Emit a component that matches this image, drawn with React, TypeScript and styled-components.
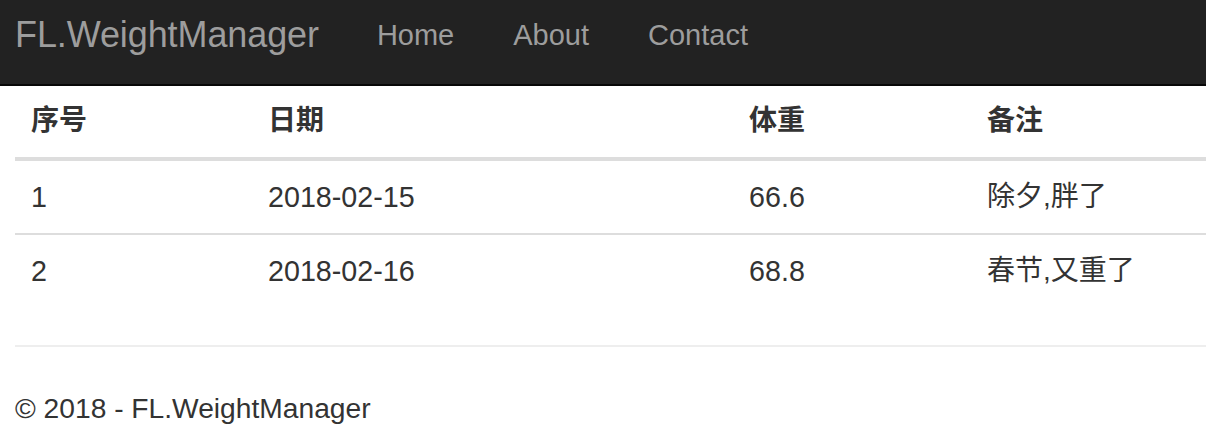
import React from 'react';
import styled, {createGlobalStyle} from 'styled-components';

const GlobalStyle = createGlobalStyle`
    html, body {
        margin: 0;
        padding: 0;
        background: #fff;
    }
    body {
        font-family: "Liberation Sans", Arial, "Noto Sans CJK SC", sans-serif;
        color: #333;
        overflow: hidden;
    }
    * {
        box-sizing: border-box;
    }
`;

const Navbar = styled.nav`
    display: flex;
    align-items: flex-start;
    height: 86px;
    background: #222;
    border-bottom: 2px solid #080808;
    padding-left: 15px;
`;

const Brand = styled.a`
    font-size: 36px;
    line-height: 70px;
    color: #9d9d9d;
    letter-spacing: -0.1px;
    margin-right: 58px;
`;

const NavLink = styled.a`
    font-size: 29px;
    line-height: 70px;
    color: #9d9d9d;
    margin-right: 59px;
`;

const Container = styled.main`
    padding-left: 15px;
`;

const Table = styled.div`
    display: grid;
    grid-template-columns: 237px 481px 238px 1fr;
    margin-bottom: 38px;
`;

const HeadCell = styled.div`
    font-weight: bold;
    font-size: 28px;
    line-height: 40px;
    padding: 15px 16px 16px;
    border-bottom: 4px solid #ddd;
`;

const Cell = styled.div<{$last?: boolean; $cjk?: boolean}>`
    font-size: ${p => (p.$cjk ? '28px' : '28.7px')};
    line-height: 40px;
    padding: 16px 16px;
    border-bottom: ${p => (p.$last ? 'none' : '2px solid #ddd')};
`;

const Rule = styled.hr`
    margin: 0;
    border: 0;
    border-top: 2px solid #eee;
`;

const Footer = styled.footer`
    font-size: 28.2px;
    line-height: 40px;
    padding-top: 41px;
`;

const columns = ['序号', '日期', '体重', '备注'];

const rows = [
    ['1', '2018-02-15', '66.6', '除夕,胖了'],
    ['2', '2018-02-16', '68.8', '春节,又重了'],
];

export default function App() {
    return (
        <>
            <GlobalStyle/>
            <Navbar>
                <Brand>FL.WeightManager</Brand>
                <NavLink>Home</NavLink>
                <NavLink>About</NavLink>
                <NavLink>Contact</NavLink>
            </Navbar>
            <Container>
                <Table>
                    {columns.map(c => <HeadCell key={c}>{c}</HeadCell>)}
                    {rows.map((r, i) =>
                        r.map((v, j) => (
                            <Cell key={`${i}-${j}`} $last={i === rows.length - 1} $cjk={j === 3}>{v}</Cell>
                        ))
                    )}
                </Table>
                <Rule/>
                <Footer>© 2018 - FL.WeightManager</Footer>
            </Container>
        </>
    );
}
